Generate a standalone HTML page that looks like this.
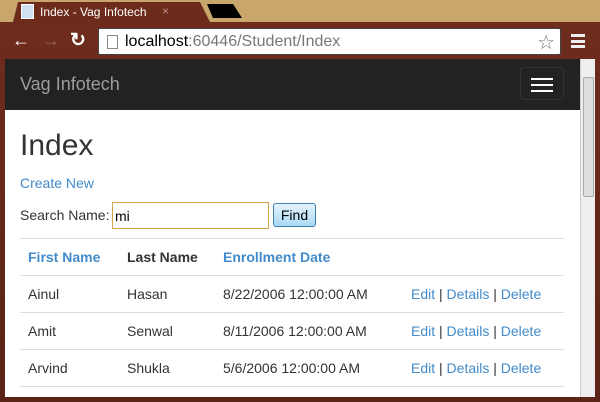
<!DOCTYPE html>
<html><head><style>
*{margin:0;padding:0;box-sizing:border-box}
body{width:600px;height:402px;overflow:hidden;background:#c9a66b;font-family:"Liberation Sans",sans-serif;position:relative}
.frame{position:absolute;left:0;top:22px;width:600px;height:380px;background:linear-gradient(#6e2c1c,#5a2416);}
.tab{position:absolute;left:12px;top:2px;width:200px;height:24px;background:#6c2b1b;clip-path:polygon(6px 0,188px 0,200px 24px,0 24px);}
.tab2{position:absolute;left:207px;top:4px;width:35px;height:14px;background:#000;clip-path:polygon(0 0,26px 0,35px 14px,6px 14px)}
.tabtxt{position:absolute;left:40px;top:5px;color:#fff;font-size:12px}
.favi{position:absolute;left:21px;top:4px;width:13px;height:15px;background:#cfe0f0;border:1px solid #fff}
.x{position:absolute;left:162px;top:4px;color:#b88;font-size:12px}
.addr{position:absolute;left:98px;top:28px;width:463px;height:27px;background:#fff;border:1px solid #444;border-radius:2px}
.url{position:absolute;left:26px;top:4px;font-size:16px;color:#777}
.url b{font-weight:normal;color:#000}
.content{position:absolute;left:5px;top:59px;width:575px;height:338px;background:#fff;overflow:hidden}
.nav{height:51px;background:#222;position:relative}
.brand{position:absolute;left:15px;top:15px;color:#9d9d9d;font-size:18px}
.burger{position:absolute;left:515px;top:8px;width:44px;height:33px;border:1px solid #333;border-radius:4px}
.burger i{position:absolute;left:10px;width:22px;height:2px;background:#fff}
.scroll{position:absolute;left:580px;top:59px;width:15px;height:338px;background:#eee;border-left:1px solid #ccc}
.thumb{position:absolute;left:2px;top:18px;width:11px;height:120px;background:#ddd;border:1px solid #aaa;border-radius:2px}
h1{position:absolute;left:15px;top:70px;font-size:30px;font-weight:normal;color:#333}
a{color:#428bca;text-decoration:none}
.cn{position:absolute;left:15px;top:116px;font-size:14px}
.sn{position:absolute;left:15px;top:148px;font-size:14px;color:#333}
.inp{position:absolute;left:107px;top:143px;width:157px;height:27px;border:1px solid #d4a54a;font-size:14px;padding:5px 2px}
.btn{position:absolute;left:268px;top:144px;width:43px;height:24px;border:1px solid #3c7fb1;border-radius:3px;background:linear-gradient(#e5f4fd,#a9d8f6);font-size:14px;text-align:center;line-height:22px;color:#000}
.hr{position:absolute;left:15px;width:544px;height:1px;background:#ddd}
.t{position:absolute;font-size:14px;color:#333}
.th{font-weight:bold}
.l{color:#428bca}
</style></head><body>
<div class="frame"></div>
<div class="tab"></div><div class="tab2"></div>
<div class="favi"></div><div class="tabtxt">Index - Vag Infotech</div><div class="x">×</div>
<div style="position:absolute;left:12px;top:30px;color:#fff;font-size:18px;font-weight:bold">←</div>
<div style="position:absolute;left:42px;top:30px;color:#9a6a5a;font-size:18px;font-weight:bold">→</div>
<div style="position:absolute;left:70px;top:29px;color:#fff;font-size:19px;font-weight:bold">↻</div>
<div class="addr"><div style="position:absolute;left:8px;top:6px;width:11px;height:14px;border:1px solid #888"></div><div class="url"><b>localhost</b>:60446/Student/Index</div><div style="position:absolute;right:5px;top:1px;font-size:20px;color:#777">☆</div></div>
<div style="position:absolute;left:571px;top:34px;width:14px;height:14px;border-top:3px solid #eee;border-bottom:3px solid #eee"><div style="margin-top:2.5px;height:3px;background:#eee"></div></div>
<div class="content">
<div class="nav"><div class="brand">Vag Infotech</div><div class="burger"><i style="top:10px"></i><i style="top:16px"></i><i style="top:22px"></i></div></div>
<h1>Index</h1>
<a class="cn">Create New</a>
<div class="sn">Search Name:</div>
<div class="inp">mi</div>
<div class="btn">Find</div>
<div class="hr" style="top:179px"></div>
<div class="hr" style="top:216px"></div>
<div class="hr" style="top:253px"></div>
<div class="hr" style="top:290px"></div>
<div class="hr" style="top:327px"></div>
<div class="t th l" style="left:23px;top:190px">First Name</div>
<div class="t th" style="left:122px;top:190px">Last Name</div>
<div class="t th l" style="left:218px;top:190px">Enrollment Date</div>
<div class="t" style="left:23px;top:227px">Ainul</div><div class="t" style="left:122px;top:227px">Hasan</div><div class="t" style="left:218px;top:227px">8/22/2006 12:00:00 AM</div><div class="t" style="left:406px;top:227px"><a>Edit</a> | <a>Details</a> | <a>Delete</a></div>
<div class="t" style="left:23px;top:264px">Amit</div><div class="t" style="left:122px;top:264px">Senwal</div><div class="t" style="left:218px;top:264px">8/11/2006 12:00:00 AM</div><div class="t" style="left:406px;top:264px"><a>Edit</a> | <a>Details</a> | <a>Delete</a></div>
<div class="t" style="left:23px;top:301px">Arvind</div><div class="t" style="left:122px;top:301px">Shukla</div><div class="t" style="left:218px;top:301px">5/6/2006 12:00:00 AM</div><div class="t" style="left:406px;top:301px"><a>Edit</a> | <a>Details</a> | <a>Delete</a></div>
</div>
<div class="scroll"><div class="thumb"></div></div>
</body></html>
